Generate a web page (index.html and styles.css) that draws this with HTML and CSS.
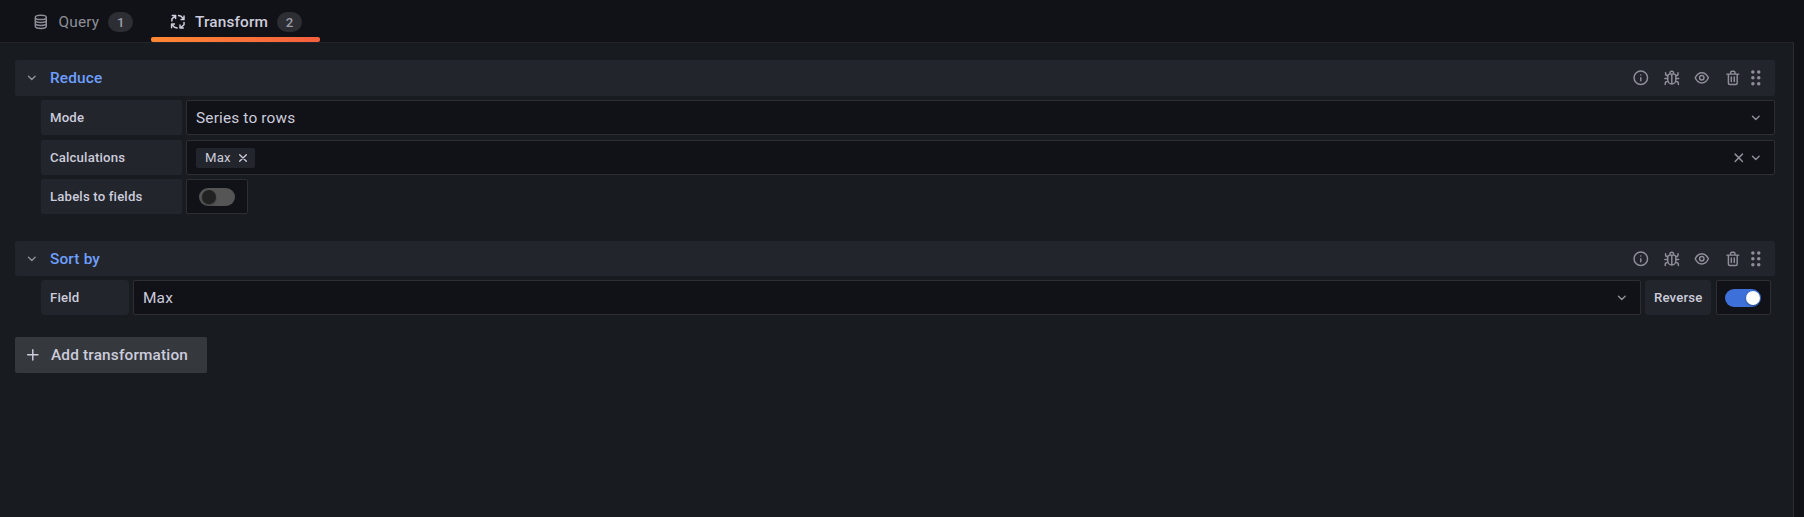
FILE: index.html
```html
<!DOCTYPE html>
<html lang="en">
<head>
<meta charset="utf-8">
<title>Transform</title>
<link rel="stylesheet" href="styles.css">
</head>
<body>
<svg class="sprite" aria-hidden="true">
  <symbol id="down" viewBox="0 0 24 24"><path d="M7.500 10l4.500 4.300 4.500-4.300"/></symbol>
  <symbol id="times" viewBox="0 0 24 24"><path d="M7 7l10 10M17 7l-10 10"/></symbol>
  <symbol id="plus" viewBox="0 0 24 24"><path d="M12 5v14M5 12h14"/></symbol>
  <symbol id="info" viewBox="0 0 24 24"><circle cx="12" cy="12" r="9.200"/><path d="M12 12v4M12 8v.1"/></symbol>
  <symbol id="bug" viewBox="0 0 24 24"><path d="M6.500 10a3 3 0 0 1 3-3h5a3 3 0 0 1 3 3v5a5.500 5.500 0 0 1-11 0zM9.500 7V5.500a2.500 2.500 0 0 1 5 0V7M12 7.500v12.500M2.500 13h4M17.500 13h4M3.500 5v1.500a2.500 2.500 0 0 0 2.500 2.500h.5M20.500 5v1.500a2.500 2.500 0 0 1-2.500 2.500h-.5M3 21v-1a3 3 0 0 1 3-3h1M21 21v-1a3 3 0 0 0-3-3h-1"/></symbol>
  <symbol id="eye" viewBox="0 0 24 24"><path d="M3 12c1.900-4.300 5.300-7 9-7s7.100 2.700 9 7c-1.900 4.300-5.300 7-9 7s-7.100-2.700-9-7z"/><circle cx="12" cy="12" r="3"/></symbol>
  <symbol id="trash" viewBox="0 0 24 24"><path d="M4 7h16M6 7v12a2 2 0 0 0 2 2h8a2 2 0 0 0 2-2V7M9 7V5a2 2 0 0 1 2-2h2a2 2 0 0 1 2 2v2M10 11v6M14 11v6"/></symbol>
  <symbol id="grip" viewBox="0 0 24 24"><g fill="currentColor" stroke="none"><circle cx="8" cy="4" r="2.400"/><circle cx="16" cy="4" r="2.400"/><circle cx="8" cy="12" r="2.400"/><circle cx="16" cy="12" r="2.400"/><circle cx="8" cy="20" r="2.400"/><circle cx="16" cy="20" r="2.400"/></g></symbol>
  <symbol id="database" viewBox="0 0 24 24"><path d="M4.500 6c0-4 15-4 15 0v12c0 4-15 4-15 0zM4.500 6c0 4 15 4 15 0M4.500 10c0 4 15 4 15 0M4.500 14c0 4 15 4 15 0"/></symbol>
  <symbol id="process" viewBox="0 0 24 24"><path d="M9 3.500H4.500M9 3.500v4M4 11V8l4.500-4M20.500 4v5h-4M20.500 9l-4-4.500-3.500-1M3.500 20v-5h4M3.500 15l4 4.500 3.500 1M15 20.500h4.500M15 20.500v-4M20.500 13v3L16 20"/></symbol>
</svg>
<nav class="tabs">
  <a class="tab"><svg class="icon"><use href="#database"/></svg>Query<span class="count">1</span></a>
  <a class="tab active"><svg class="icon"><use href="#process"/></svg>Transform<span class="count">2</span></a>
</nav>
<main class="panel">
  <section class="transformation">
    <header class="row-header">
      <svg class="icon"><use href="#down"/></svg><h2>Reduce</h2>
      <div class="actions"><svg class="icon"><use href="#info"/></svg><svg class="icon"><use href="#bug"/></svg><svg class="icon"><use href="#eye"/></svg><svg class="icon"><use href="#trash"/></svg><svg class="icon grip"><use href="#grip"/></svg></div>
    </header>
    <div class="fields">
      <div class="field mode"><label class="label">Mode</label><div class="select"><span>Series to rows</span><svg class="icon"><use href="#down"/></svg></div></div>
      <div class="field"><label class="label">Calculations</label><div class="select"><span class="chip">Max<svg class="icon"><use href="#times"/></svg></span><svg class="icon clear"><use href="#times"/></svg><svg class="icon"><use href="#down"/></svg></div></div>
      <div class="field"><label class="label">Labels to fields</label><div class="switch-box"><span class="switch"></span></div></div>
    </div>
  </section>
  <section class="transformation sort">
    <header class="row-header">
      <svg class="icon"><use href="#down"/></svg><h2>Sort by</h2>
      <div class="actions"><svg class="icon"><use href="#info"/></svg><svg class="icon"><use href="#bug"/></svg><svg class="icon"><use href="#eye"/></svg><svg class="icon"><use href="#trash"/></svg><svg class="icon grip"><use href="#grip"/></svg></div>
    </header>
    <div class="fields">
      <div class="field"><label class="label">Field</label><div class="select"><span>Max</span><svg class="icon"><use href="#down"/></svg></div><label class="label reverse">Reverse</label><div class="switch-box"><span class="switch on"></span></div></div>
    </div>
  </section>
  <button class="add"><svg class="icon"><use href="#plus"/></svg>Add transformation</button>
</main>
</body>
</html>
```

FILE: styles.css
```css
* { box-sizing: border-box; }
body {
  margin: 0;
  height: 517px;
  overflow: hidden;
  display: flex;
  flex-direction: column;
  background: #111217;
  color: #ccccdc;
  font: 400 15.4px/24px Roboto, sans-serif;
  letter-spacing: 0.165px;
}
.sprite { display: none; }
.icon {
  width: 17.6px;
  height: 17.6px;
  flex: none;
  fill: none;
  stroke: currentColor;
  stroke-width: 2;
  stroke-linecap: round;
  stroke-linejoin: round;
}
.tabs { display: flex; height: 42px; padding-left: 18px; flex: none; }
.tab {
  display: flex;
  align-items: center;
  height: 42px;
  padding: 2px 18px 0 14px;
  color: #8e8e99;
}
.tab .icon { margin-right: 9px; }
.tab.active {
  position: relative;
  color: #ccccdc;
  font-weight: 500;
  padding: 2px 18px 0 18px;
}
.tab.active .icon { margin-right: 8px; }
.tab.active::after {
  content: "";
  position: absolute;
  left: 0;
  right: 0;
  bottom: 0;
  height: 5px;
  border-radius: 2px;
  background: linear-gradient(90deg, #ff8833, #f55f3e);
}
.count {
  height: 20px;
  width: 25px;
  margin-left: 9px;
  border-radius: 10px;
  background: #2d2e34;
  color: #9c9ca9;
  font-size: 13.2px;
  font-weight: 500;
  line-height: 21px;
  text-align: center;
}
.panel {
  flex: 1;
  width: 1794px;
  padding: 17px 18px 0 15px;
  border-top: 1px solid #212328;
  border-right: 1px solid #2a2b31;
  background: #181b1f;
}
.row-header {
  display: flex;
  align-items: center;
  height: 36px;
  padding: 0 10px 0 8px;
  border-radius: 2px;
  background: #22252b;
  color: #8e8e99;
}
.row-header h2 {
  margin: 0 0 0 9.4px;
  color: #6e9fff;
  font-size: 15.4px;
  font-weight: 500;
}
.actions { display: flex; margin-left: auto; gap: 13.2px; }
.actions .grip { margin-left: -7.6px; }
.fields { display: flex; flex-direction: column; gap: 4px; padding: 4px 0 0 26px; }
.field { display: flex; height: 35px; gap: 4px; }
.mode { margin-bottom: 1px; }
.label {
  width: 141px;
  padding: 0 9px;
  border-radius: 2px;
  background: #22252b;
  font-size: 13.2px;
  font-weight: 500;
  line-height: 35px;
}
.select, .switch-box {
  display: flex;
  align-items: center;
  border: 1px solid #2d2e34;
  border-radius: 2px;
  background: #111217;
}
.select { flex: 1; padding: 0 9px; }
.select > .icon { color: #8e8e99; }
.select > :first-child { margin-right: auto; }
.chip {
  display: flex;
  align-items: center;
  height: 20px;
  padding: 0 4px 0 9px;
  border-radius: 2px;
  background: #22252b;
  font-size: 13.2px;
}
.chip .icon { width: 16px; height: 16px; margin-left: 4px; }
.switch-box { width: 62px; justify-content: center; }
.switch {
  width: 36px;
  height: 18px;
  padding: 2px 3px;
  border-radius: 9px;
  background: #555;
}
.switch::before {
  content: "";
  display: block;
  width: 14px;
  height: 14px;
  border-radius: 50%;
  background: #222;
  box-shadow: 0 1px 2px #0006;
}
.switch.on { background: #3d71d9; padding: 2px 1px; }
.switch.on::before { margin-left: auto; background: #fff; }
.sort { margin-top: 27px; }
.sort .row-header { height: 35px; }
.sort .field { padding-right: 4px; }
.sort .label { width: 88px; border-radius: 4px; }
.sort .reverse { width: 66px; }
.sort .switch-box { width: 55px; margin-left: 1px; padding-right: 1px; }
.add {
  display: flex;
  align-items: center;
  width: 192px;
  height: 36px;
  margin-top: 22px;
  padding: 0 9px;
  border: 0;
  border-radius: 2px;
  background: #35383d;
  color: #ccccdc;
  font: 500 15.4px Roboto, sans-serif;
  letter-spacing: 0.165px;
}
.add .icon { margin-right: 9.4px; }
```
